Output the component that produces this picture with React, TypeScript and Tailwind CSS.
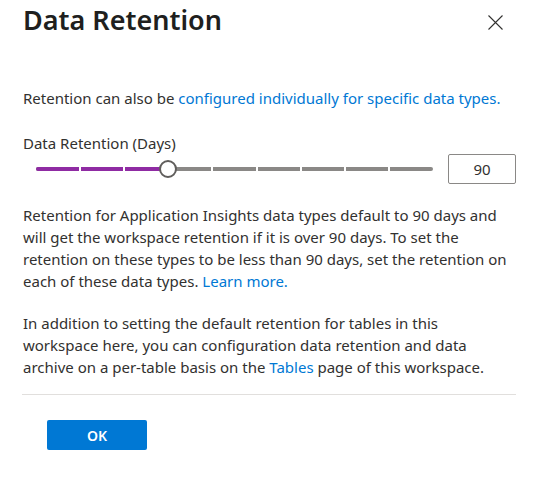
const FONT = { fontFamily: '"Noto Sans", "Open Sans", Arial, sans-serif' };

const TRACK_WIDTH = 397;
const STEPS = 9;
const VALUE_STEP = 3;

function RetentionSlider() {
  const step = TRACK_WIDTH / STEPS;
  const thumbX = step * VALUE_STEP;
  const ticks = Array.from({ length: STEPS - 1 }, (_, i) => (i + 1) * step);

  return (
    <div className="relative ml-[13px] h-[30px] w-[397px]">
      <div className="absolute left-0 right-0 top-[13px] h-[4px] overflow-hidden rounded-full bg-[#8a8886]">
        <div className="h-full bg-[#8f2ba3]" style={{ width: thumbX }} />
        {ticks.map((x) => (
          <div
            key={x}
            className="absolute top-0 h-full w-[2px] bg-white"
            style={{ left: x - 1 }}
          />
        ))}
      </div>
      <div
        className="absolute top-[6px] h-[18px] w-[18px] rounded-full border-2 border-[#605e5c] bg-white"
        style={{ left: thumbX - 9 }}
      />
    </div>
  );
}

export default function App() {
  return (
    <div className="h-[479px] w-[536px] bg-white text-[#323130]" style={FONT}>
      <div className="flex items-start justify-between pl-[23px] pr-[33px]">
        <h1 className="pt-[2px] text-[27px] font-semibold leading-[36px] text-[#201f1e]">Data Retention</h1>
        <button className="mt-[15px] h-[15px] w-[15px] text-[#323130]" aria-label="Close">
          <svg viewBox="0 0 15 15" width="15" height="15" fill="none" stroke="currentColor" strokeWidth="1.1">
            <path d="M0.5 0.5 L14.5 14.5 M14.5 0.5 L0.5 14.5" />
          </svg>
        </button>
      </div>

      <div className="w-[520px] pl-[23px] pt-[49px] text-[15px] leading-[22px]">
        <p>
          Retention can also be{' '}
          <a className="text-[#0078d4]">configured individually for specific data types.</a>
        </p>

        <div className="mt-[24px] leading-[20px]">Data Retention (Days)</div>

        <div className="mt-[1px] flex items-center">
          <RetentionSlider />
          <div className="ml-[15px] flex h-[30px] w-[68px] items-center justify-center rounded-[2px] border border-[#8a8886]">
            90
          </div>
        </div>

        <p className="mt-[20px]">
          Retention for Application Insights data types default to 90 days and will get the workspace retention if it is over 90 days. To set the retention on these types to be less than 90 days, set the retention on each of these data types.{' '}
          <a className="text-[#0078d4]">Learn more.</a>
        </p>

        <p className="mt-[20px] pr-[10px]">
          In addition to setting the default retention for tables in this workspace here, you can configuration data retention and data archive on a per-table basis on the{' '}
          <a className="text-[#0078d4]">Tables</a> page of this workspace.
        </p>
      </div>

      <div className="ml-[22px] mt-[16px] h-px w-[494px] bg-[#e1dfdd]" />

      <div className="pl-[47px] pt-[25px]">
        <button className="h-[30px] w-[100px] rounded-[2px] bg-[#0078d4] text-[14px] font-semibold text-white">
          OK
        </button>
      </div>
    </div>
  );
}
